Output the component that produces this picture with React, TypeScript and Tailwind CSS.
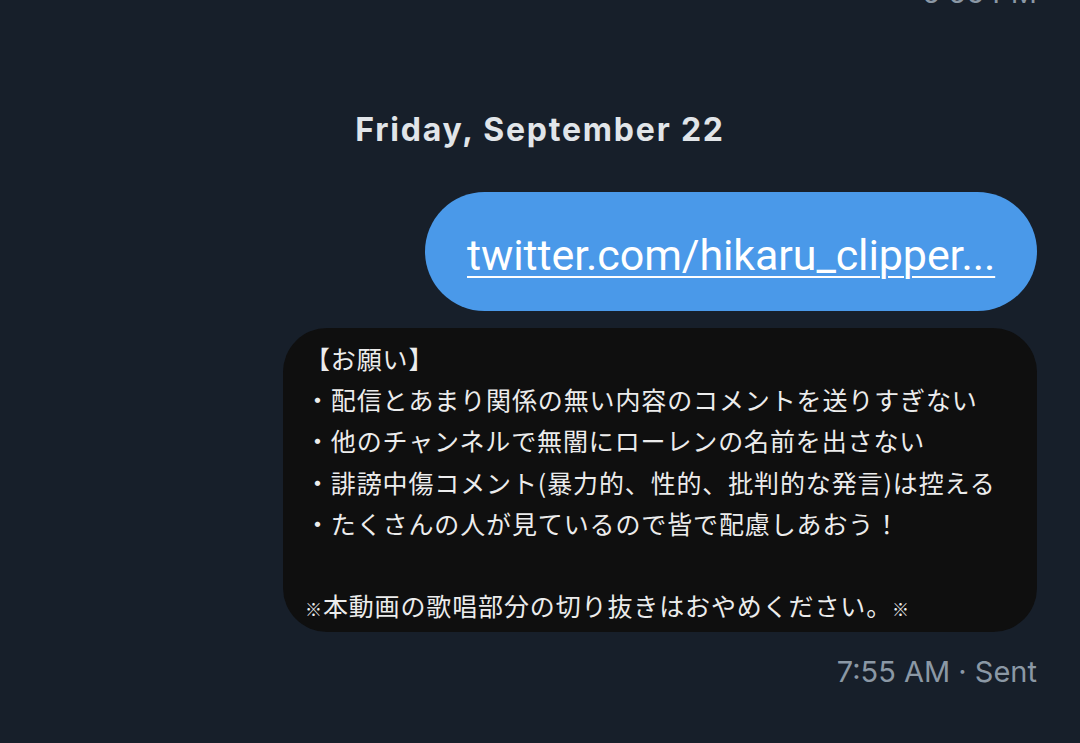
import React from 'react';

const lines: React.ReactNode[] = [
  '【お願い】',
  '・配信とあまり関係の無い内容のコメントを送りすぎない',
  '・他のチャンネルで無闇にローレンの名前を出さない',
  '・誹謗中傷コメント(暴力的、性的、批判的な発言)は控える',
  '・たくさんの人が見ているので皆で配慮しあおう！',
  '',
  <>
    <span className="text-[17px]">※</span>本動画の歌唱部分の切り抜きはおやめください。
    <span className="text-[17px]">※</span>
  </>,
];

const App: React.FC = () => {
  return (
    <div className="w-[1080px] h-[743px] overflow-hidden bg-[#171f2a] font-['Inter',sans-serif]">
      <div className="flex flex-col items-end pr-[43px]">
        {/* previous message time, cut off at top */}
        <div className="-mt-[24px] text-[29px] leading-[34px] text-[#8b98a5]">5:56 PM</div>

        {/* date divider */}
        <div className="self-stretch -mr-[43px] flex justify-center mt-[100px]">
          <span className="text-[32px] leading-[40px] font-bold text-[#e1e5e9] tracking-[1.8px]">
            Friday, September 22
          </span>
        </div>

        {/* link bubble */}
        <div className="mt-[42px] w-[612px] h-[119px] rounded-full bg-[#4a99e9] flex items-center pl-[42px] pt-[6px]">
          <span className="text-white text-[43px] leading-[50px] underline underline-offset-[6px] decoration-[2px] font-['Roboto',sans-serif] tracking-[-0.1px]">
            twitter.com/hikaru_clipper...
          </span>
        </div>

        {/* image of the notice */}
        <div className="mt-[17px] w-[754px] h-[304px] rounded-[44px] bg-[#0f0f0f] pl-[22px] pt-[10px] font-['Noto_Sans_CJK_JP',sans-serif] text-[#ececec] text-[25px] leading-[41.2px] tracking-[0.87px]">
          {lines.map((l, i) => (
            <div key={i} className="h-[41.2px] whitespace-nowrap">{l}</div>
          ))}
        </div>

        {/* time */}
        <div className="mt-[22px] text-[29px] leading-[36px] text-[#8b98a5]">7:55 AM · Sent</div>
      </div>
    </div>
  );
};

export default App;
